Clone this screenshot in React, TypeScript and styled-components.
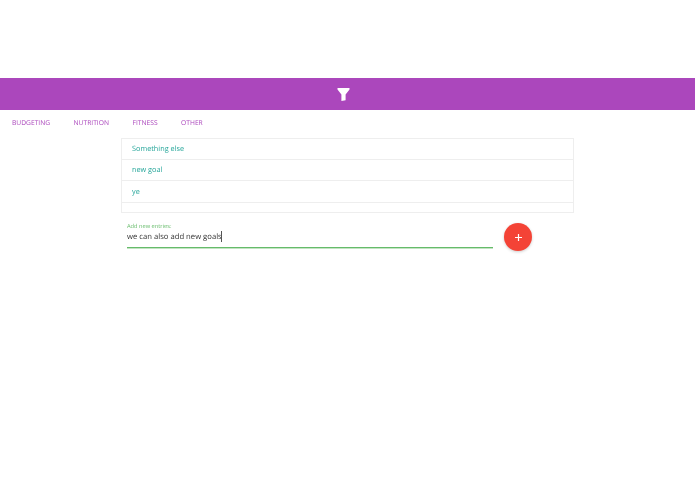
import { createGlobalStyle, styled } from 'styled-components';

const GlobalStyle = createGlobalStyle`
  html, body {
    margin: 0;
    padding: 0;
    background: #fff;
    font-family: 'Open Sans', 'Noto Sans', sans-serif;
    text-rendering: geometricPrecision;
  }
`;

const tabs = ['BUDGETING', 'NUTRITION', 'FITNESS', 'OTHER'];
const goals = ['Something else', 'new goal', 'ye'];

const FilterIcon = () => (
  <svg width="13" height="13" viewBox="0 0 13 13">
    <path d="M0.5 0H12.5V1.6L8.6 6.4V12.2L4.4 13V6.4L0.5 1.6Z" fill="#fff" />
  </svg>
);

export default function App() {
  return (
    <Page>
      <GlobalStyle />
      <Toolbar>
        <FilterIcon />
      </Toolbar>
      <Tabs>
        {tabs.map((tab) => (
          <Tab key={tab}>{tab}</Tab>
        ))}
      </Tabs>
      <Content>
        <GoalList>
          {goals.map((goal) => (
            <GoalRow key={goal}>{goal}</GoalRow>
          ))}
          <GoalFooter />
        </GoalList>
        <EntryRow>
          <Field>
            <FieldLabel htmlFor="entry">Add new entries:</FieldLabel>
            <FieldInput id="entry" defaultValue="we can also add new goals" />
            <Caret />
          </Field>
          <AddButton aria-label="Add">
            <svg width="9" height="9" viewBox="0 0 9 9">
              <path d="M4.5 1V8M1 4.5H8" stroke="#fff" strokeWidth="1.2" />
            </svg>
          </AddButton>
        </EntryRow>
      </Content>
    </Page>
  );
}

const Page = styled.div`
  min-height: 494px;
  padding-top: 78px;
  box-sizing: border-box;
  will-change: opacity;
`;

const Toolbar = styled.div`
  height: 32px;
  padding-left: 337px;
  display: flex;
  align-items: center;
  background: #ab47bc;
`;

const Tabs = styled.div`
  height: 25px;
  padding-left: 12px;
  display: flex;
  align-items: center;
  gap: 23.5px;
`;

const Tab = styled.span`
  font-size: 6.7px;
  color: #ab47bc;
  line-height: 25px;
`;

const Content = styled.div`
  width: 453px;
  margin: 3px 0 0 121px;
`;

const GoalList = styled.div`
  border: 1px solid #eeeeee;
  display: flex;
  flex-direction: column;
`;

const GoalRow = styled.div`
  height: 21px;
  box-sizing: border-box;
  padding-left: 10px;
  display: flex;
  align-items: center;
  border-bottom: 1px solid #eeeeee;
  font-size: 7.3px;
  color: #26a69a;

  &:nth-child(3) {
    height: 22px;
  }
`;

const GoalFooter = styled.div`
  height: 9px;
`;

const EntryRow = styled.div`
  display: flex;
  align-items: flex-start;
  margin-top: 9px;
  padding-left: 6px;
`;

const Field = styled.div`
  position: relative;
  width: 366px;
  height: 25px;
  border-bottom: 1px solid #66bb6a;
  box-shadow: 0 1px 0 rgba(102, 187, 106, 0.4);
  display: flex;
  flex-direction: column;
`;

const FieldLabel = styled.label`
  font-size: 5.7px;
  line-height: 9px;
  color: #66bb6a;
`;

const FieldInput = styled.input`
  border: 0;
  outline: 0;
  padding: 0;
  font-family: inherit;
  font-size: 7.7px;
  height: 12px;
  line-height: 12px;
  color: #333;
  background: transparent;
  text-rendering: geometricPrecision;
`;

const Caret = styled.span`
  position: absolute;
  left: 94px;
  top: 9px;
  width: 1px;
  height: 11px;
  background: #555;
`;

const AddButton = styled.button`
  width: 28px;
  height: 28px;
  margin: 1px 0 0 11px;
  padding: 0;
  border: 0;
  border-radius: 50%;
  background: #f44336;
  box-shadow: 0 1px 3px rgba(0, 0, 0, 0.2);
  display: flex;
  align-items: center;
  justify-content: center;
`;
